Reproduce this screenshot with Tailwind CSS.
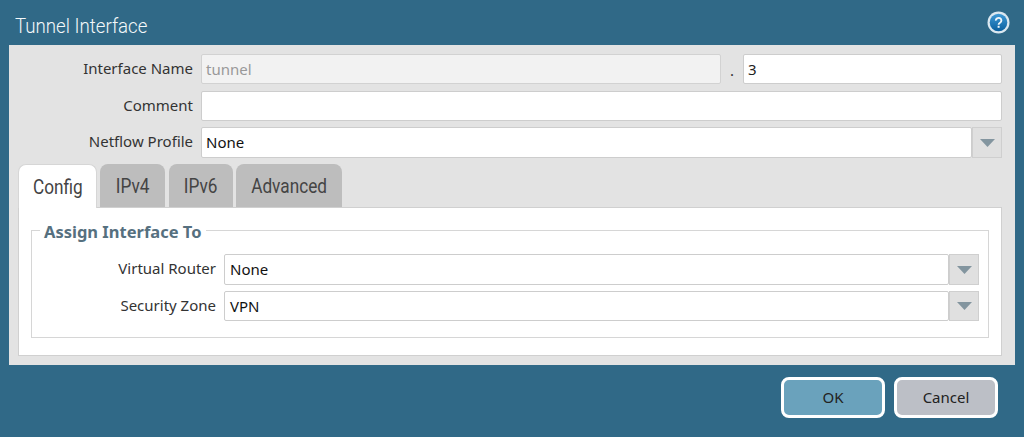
<!DOCTYPE html>
<html lang="en">
<head>
  <meta charset="UTF-8" />
  <title>Tunnel Interface</title>
  <script src="https://cdn.jsdelivr.net/npm/@tailwindcss/browser@4"></script>
</head>
<body class="bg-[#306987] h-[437px] overflow-hidden font-['Noto_Sans',sans-serif] text-[15px]">
  <!-- title bar -->
  <div class="h-[45px] pl-[15px] pr-[15px] flex items-center justify-between">
    <h1 class="font-['Roboto',sans-serif] font-light text-[21px] leading-[26px] text-[#f4f8fa] mt-[7px] origin-left scale-x-[0.89]">Tunnel Interface</h1>
    <svg class="w-[23px] h-[23px] mt-[-1px] mr-[-1px]" viewBox="0 0 23 23">
      <defs>
        <linearGradient id="help" x1="0" y1="0" x2="0" y2="1">
          <stop offset="0" stop-color="#3f9ad6" />
          <stop offset="1" stop-color="#0a5f9e" />
        </linearGradient>
      </defs>
      <circle cx="11.5" cy="11.5" r="11" fill="#dbe8f0" />
      <circle cx="11.5" cy="11.5" r="8.8" fill="url(#help)" />
      <path d="M8.8 9.6a2.8 2.6 0 1 1 4.3 2.1c-1 .6-1.5 1-1.5 2" fill="none" stroke="#eef6fa" stroke-width="1.9" />
      <rect x="10.6" y="14.8" width="2" height="2" fill="#eef6fa" />
    </svg>
  </div>

  <!-- dialog body -->
  <div class="ml-[9px] w-[1006px] h-[320px] bg-[#e3e3e3] pl-[9px] pr-[13px] pt-[9px]">
    <div class="flex h-[30px] mb-[7px]">
      <label class="w-[175px] text-right leading-[28px] text-[#333]">Interface Name</label>
      <div class="ml-[8px] w-[520px] bg-[#f2f2f2] border border-[#d2d2d2] rounded-[2px] px-[4px] leading-[28px] text-[#999]">tunnel</div>
      <div class="w-[22px] text-center leading-[32px] text-[#333]">.</div>
      <div class="w-[259px] bg-white border border-[#cdcdcd] rounded-[2px] px-[4px] leading-[28px] text-[#222]">3</div>
    </div>
    <div class="flex h-[30px] mb-[6px]">
      <label class="w-[175px] text-right leading-[28px] text-[#333]">Comment</label>
      <div class="ml-[8px] w-[801px] bg-white border border-[#cdcdcd] rounded-[2px]"></div>
    </div>
    <div class="flex h-[31px] mb-[6px]">
      <label class="w-[175px] text-right leading-[29px] text-[#333]">Netflow Profile</label>
      <div class="ml-[8px] w-[771px] bg-white border border-[#cdcdcd] rounded-[2px] px-[4px] leading-[29px] text-[#111]">None</div>
      <div class="w-[30px] bg-[#e0e0e0] border border-[#cfcfcf] flex items-center justify-center">
        <svg class="w-[15px] h-[8px]" viewBox="0 0 15 8"><path d="M0 0h15L7.5 8z" fill="#83959f" /></svg>
      </div>
    </div>

    <!-- tabs -->
    <div class="flex h-[43px] font-['Roboto',sans-serif] text-[20px] text-[#444]">
      <div class="w-[79px] h-[44px] mr-[3px] bg-white rounded-t-[8px] text-center leading-[44px] border-x border-t border-[#d6d6d6] relative z-10"><span class="inline-block scale-x-[0.86]">Config</span></div>
      <div class="w-[65px] mr-[4px] bg-[#bdbdbd] rounded-t-[8px] text-center leading-[44px]"><span class="inline-block scale-x-[0.86]">IPv4</span></div>
      <div class="w-[64px] mr-[3px] bg-[#bdbdbd] rounded-t-[8px] text-center leading-[44px]"><span class="inline-block scale-x-[0.86]">IPv6</span></div>
      <div class="w-[106px] bg-[#bdbdbd] rounded-t-[8px] text-center leading-[44px]"><span class="inline-block scale-x-[0.86]">Advanced</span></div>
    </div>
    <div class="w-[984px] h-[149px] bg-white border border-[#d0d0d0] pt-[10px] pl-[12px]">
      <fieldset class="w-[958px] h-[120px] border border-[#d6d6d6] pl-[8px] pr-[9px]">
        <legend class="px-[4px] text-[16.5px] pt-[4px] leading-[20px] font-bold text-[#56707f]">Assign Interface To</legend>
        <div class="flex h-[31px] mt-[12px] mb-[6px]">
          <label class="w-[176px] text-right leading-[29px] text-[#333]">Virtual Router</label>
          <div class="ml-[8px] w-[725px] bg-white border border-[#cdcdcd] rounded-[2px] px-[5px] leading-[29px] text-[#111]">None</div>
          <div class="w-[30px] bg-[#e0e0e0] border border-[#cfcfcf] flex items-center justify-center">
            <svg class="w-[15px] h-[8px]" viewBox="0 0 15 8"><path d="M0 0h15L7.5 8z" fill="#83959f" /></svg>
          </div>
        </div>
        <div class="flex h-[30px]">
          <label class="w-[176px] text-right leading-[28px] text-[#333]">Security Zone</label>
          <div class="ml-[8px] w-[725px] bg-white border border-[#cdcdcd] rounded-[2px] px-[5px] leading-[28px] text-[#111]">VPN</div>
          <div class="w-[30px] bg-[#e0e0e0] border border-[#cfcfcf] flex items-center justify-center">
            <svg class="w-[15px] h-[8px]" viewBox="0 0 15 8"><path d="M0 0h15L7.5 8z" fill="#83959f" /></svg>
          </div>
        </div>
      </fieldset>
    </div>
  </div>

  <!-- footer buttons -->
  <div class="flex justify-end gap-[9px] pt-[12px] pr-[26px]">
    <button class="w-[104px] h-[41px] rounded-[8px] border-[3px] border-white bg-[#6aa2bc] text-[#222]">OK</button>
    <button class="w-[104px] h-[41px] rounded-[8px] border-[3px] border-white bg-[#bcbfc6] text-[#222]">Cancel</button>
  </div>
</body>
</html>
